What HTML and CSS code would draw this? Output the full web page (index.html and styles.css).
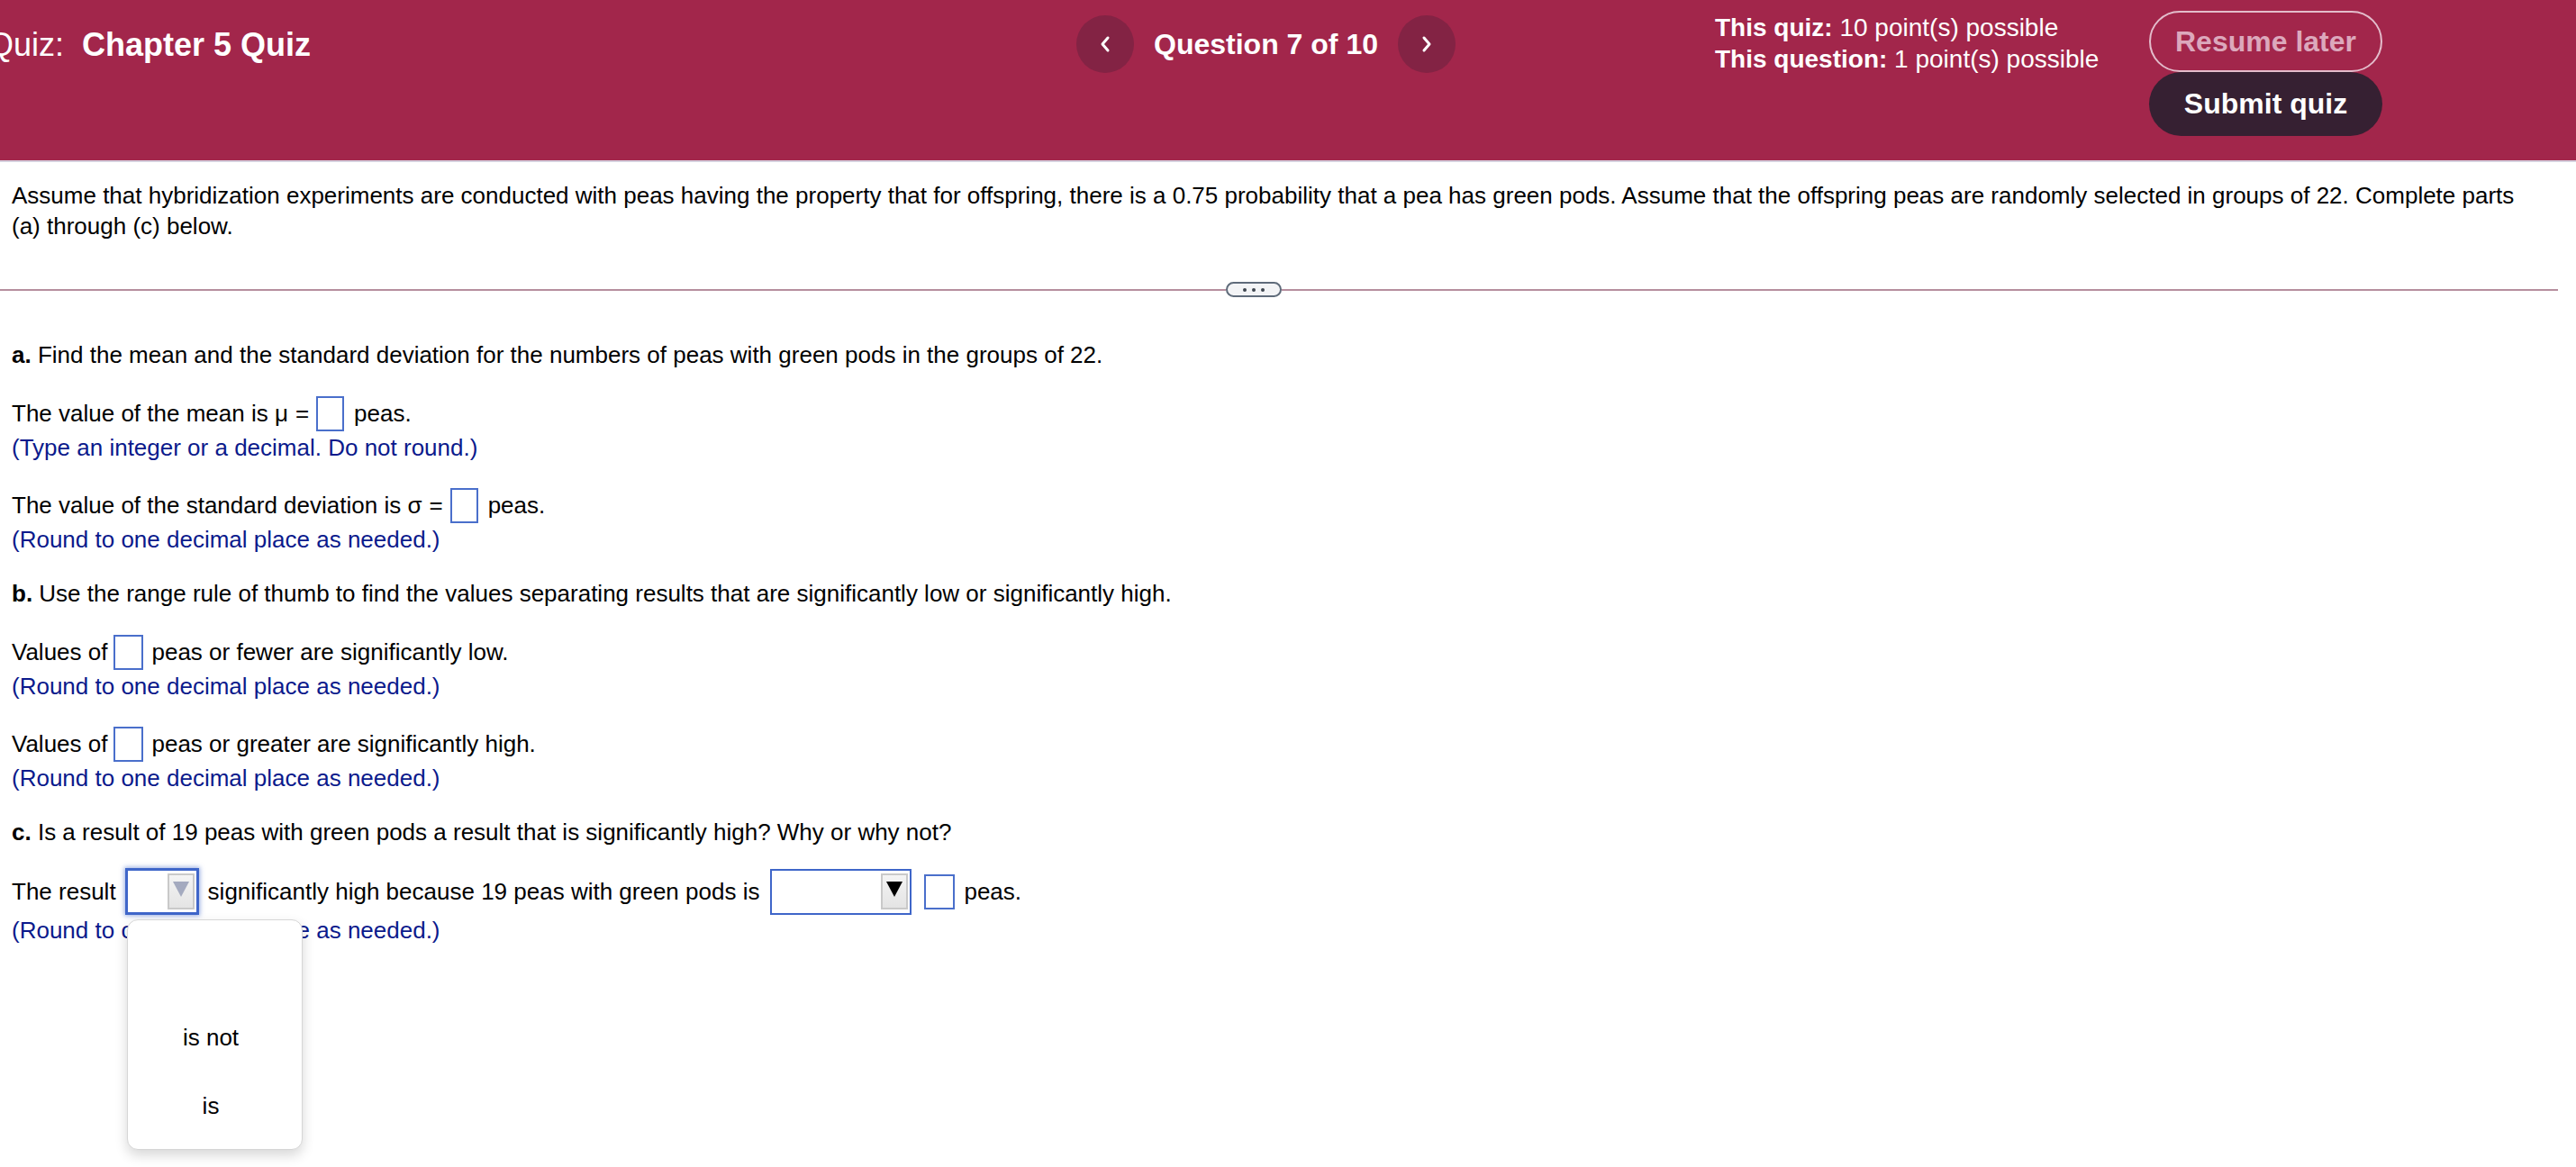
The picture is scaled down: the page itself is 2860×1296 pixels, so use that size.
FILE: index.html
```
<!DOCTYPE html>
<html lang="en">
<head>
<meta charset="utf-8">
<title>Quiz: Chapter 5 Quiz</title>
<link rel="stylesheet" href="styles.css">
</head>
<body>
<header class="topbar">
  <h1 class="quiz-title"><span class="quiz-label">Quiz:</span><strong>Chapter 5 Quiz</strong></h1>
  <nav class="qnav">
    <button class="nav-btn" aria-label="Previous question">
      <svg width="14" height="20" viewBox="0 0 14 20"><polyline points="10,3 4,10 10,17" fill="none" stroke="#fff" stroke-width="3" stroke-linecap="round" stroke-linejoin="round"/></svg>
    </button>
    <span class="qnav-label">Question 7 of 10</span>
    <button class="nav-btn" aria-label="Next question">
      <svg width="14" height="20" viewBox="0 0 14 20"><polyline points="4,3 10,10 4,17" fill="none" stroke="#fff" stroke-width="3" stroke-linecap="round" stroke-linejoin="round"/></svg>
    </button>
  </nav>
  <div class="points">
    <div><b>This quiz:</b> 10 point(s) possible</div>
    <div><b>This question:</b> 1 point(s) possible</div>
  </div>
  <div class="actions">
    <button class="btn-resume">Resume later</button>
    <button class="btn-submit">Submit quiz</button>
  </div>
</header>

<main class="content">
  <p class="stem">Assume that hybridization experiments are conducted with peas having the property that for offspring, there is a 0.75 probability that a pea has green pods. Assume that the offspring peas are randomly selected in groups of 22. Complete parts<br>(a) through (c) below.</p>

  <div class="divider">
    <span class="divider-line divider-left"></span>
    <span class="divider-pill"><i></i><i></i><i></i></span>
    <span class="divider-line divider-right"></span>
  </div>

  <section class="part part-a">
    <p class="part-q"><b>a.</b> Find the mean and the standard deviation for the numbers of peas with green pods in the groups of 22.</p>
    <div class="row"><span>The value of the mean is μ</span><span class="eq">=</span><span class="box"></span><span>peas.</span></div>
    <p class="hint">(Type an integer or a decimal. Do not round.)</p>
    <div class="row row-gap"><span>The value of the standard deviation is σ</span><span class="eq">=</span><span class="box"></span><span>peas.</span></div>
    <p class="hint">(Round to one decimal place as needed.)</p>
  </section>

  <section class="part part-b">
    <p class="part-q"><b>b.</b> Use the range rule of thumb to find the values separating results that are significantly low or significantly high.</p>
    <div class="row"><span>Values of</span><span class="box box-tight"></span><span>peas or fewer are significantly low.</span></div>
    <p class="hint">(Round to one decimal place as needed.)</p>
    <div class="row row-gap"><span>Values of</span><span class="box box-tight"></span><span>peas or greater are significantly high.</span></div>
    <p class="hint">(Round to one decimal place as needed.)</p>
  </section>

  <section class="part part-c">
    <p class="part-q"><b>c.</b> Is a result of 19 peas with green pods a result that is significantly high? Why or why not?</p>
    <div class="row row-select">
      <span>The result</span>
      <span class="select select-open">
        <span class="select-btn">
          <svg width="18" height="18" viewBox="0 0 18 18"><polygon points="0,1 18,1 9,18" fill="#a4aabf"/></svg>
        </span>
      </span>
      <span>significantly high because 19 peas with green pods is</span>
      <span class="select select-wide">
        <span class="select-btn">
          <svg width="18" height="18" viewBox="0 0 18 18"><polygon points="0,1 18,1 9,18" fill="#000"/></svg>
        </span>
      </span>
      <span class="box box-c"></span>
      <span>peas.</span>
      <div class="dropdown">
        <div class="option">is not</div>
        <div class="option">is</div>
      </div>
    </div>
    <p class="hint hint-c">(Round to one decimal place as needed.)</p>
  </section>
</main>
</body>
</html>
```

FILE: styles.css
```
* { box-sizing: border-box; }

html, body {
  margin: 0;
  padding: 0;
  background: #fff;
}

body {
  width: 2860px;
  height: 1296px;
  overflow: hidden;
  font-family: "Liberation Sans", Arial, Helvetica, sans-serif;
  color: #000;
}

/* ---------- header ---------- */
.topbar {
  height: 180px;
  background: #a2264b;
  border-bottom: 2px solid #d6d0de;
  display: flex;
  align-items: flex-start;
  padding-right: 215px;
  color: #fff;
}

.quiz-title {
  flex: 0 0 1208px;
  margin: 28px 0 0 -13px;
  font-size: 36px;
  line-height: 44px;
  font-weight: normal;
  white-space: nowrap;
}

.quiz-label { margin-right: 20px; }

.qnav {
  display: flex;
  align-items: center;
  margin-top: 17px;
}

.nav-btn {
  width: 64px;
  height: 64px;
  border: 0;
  border-radius: 50%;
  background: #832344;
  padding: 0;
  display: flex;
  align-items: center;
  justify-content: center;
}

.qnav-label {
  width: 293px;
  text-align: center;
  font-weight: bold;
  font-size: 32px;
  line-height: 40px;
  white-space: nowrap;
}

.points {
  margin: 13px 0 0 288px;
  font-size: 28px;
  line-height: 35px;
  white-space: nowrap;
}

.actions {
  margin: 12px 0 0 auto;
  width: 259px;
  display: flex;
  flex-direction: column;
}

.btn-resume,
.btn-submit {
  font-family: inherit;
  font-weight: bold;
  font-size: 32px;
  width: 259px;
  padding: 0;
}

.btn-resume {
  height: 68px;
  border: 2px solid #e3bccb;
  border-radius: 34px;
  background: transparent;
  color: #dca8bc;
}

.btn-submit {
  height: 71px;
  border: 0;
  border-radius: 36px;
  background: #362032;
  color: #fff;
}

/* ---------- content ---------- */
.content {
  padding: 20px 20px 0 13px;
  font-size: 26px;
  line-height: 30px;
}

.content p { margin: 0; }

.stem {
  white-space: nowrap;
  line-height: 34px;
}

.divider {
  display: flex;
  align-items: center;
  height: 17px;
  margin: 45px 0 0 -13px;
}

.divider-line {
  height: 2px;
  background: #b68e9e;
}

.divider-left { flex: 0 0 1361px; }
.divider-right { flex: 1 1 auto; }

.divider-pill {
  width: 62px;
  height: 17px;
  border: 2px solid #5f6b7a;
  border-radius: 9px;
  background: #f3f4f6;
  display: flex;
  align-items: center;
  justify-content: center;
  gap: 6px;
}

.divider-pill i {
  width: 4px;
  height: 4px;
  border-radius: 50%;
  background: #3f4650;
}

.part-a { margin-top: 49px; }
.part-b { margin-top: 30px; }
.part-c { margin-top: 30px; }

.part-q { white-space: nowrap; }

.row {
  display: flex;
  align-items: center;
  height: 40px;
  margin-top: 30px;
  white-space: nowrap;
}

.row-gap { margin-top: 29px; }

.eq { margin-left: 8px; }

.box {
  display: inline-block;
  width: 31px;
  height: 39px;
  border: 2px solid #4a6fcb;
  margin: 0 11px 0 8px;
  background: #fff;
}

.box-tight {
  width: 33px;
  margin: 0 9px 0 7px;
}

.hint {
  color: #0b1a8c;
  margin-top: 3px !important;
}

/* ---------- part c selects ---------- */
.row-select {
  position: relative;
  height: 52px;
  margin-top: 25px;
}

.select {
  display: inline-flex;
  justify-content: flex-end;
  align-items: center;
  height: 52px;
  border: 2px solid #3f66c9;
  background: #fff;
  padding-right: 2px;
}

.select-open {
  width: 82px;
  margin: 0 10px 0 10px;
  border-width: 3px;
  box-shadow: 0 0 5px 1px rgba(63, 102, 201, 0.55);
}

.select-wide {
  width: 157px;
  height: 51px;
  margin: 0 14px 0 12px;
}

.select-btn {
  width: 30px;
  height: 40px;
  border: 2px solid #c9c9c9;
  background: linear-gradient(#f4f4f4, #e4e4e4);
  display: flex;
  align-items: flex-start;
  justify-content: center;
  padding-top: 6px;
}

.box-c {
  height: 39px;
  width: 34px;
  margin: 0 10px 0 0;
}

.dropdown {
  position: absolute;
  left: 128px;
  top: 57px;
  width: 195px;
  height: 256px;
  background: #fff;
  border: 1px solid #d6d6d6;
  border-radius: 12px;
  box-shadow: 0 6px 14px rgba(0, 0, 0, 0.16);
  padding: 92px 9px 0 0;
  z-index: 5;
}

.option {
  height: 76px;
  line-height: 76px;
  text-align: center;
  font-size: 26px;
  color: #000;
}

.hint-c { margin-top: 2px !important; }
```
